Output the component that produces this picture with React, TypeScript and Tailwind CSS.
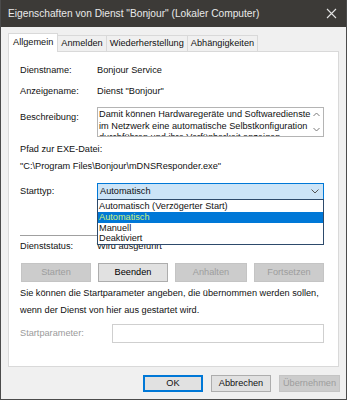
import React from "react";

const tabs = ["Allgemein", "Anmelden", "Wiederherstellung", "Abhängigkeiten"];

function Btn({ label, disabled, w }: { label: string; disabled?: boolean; w: string }) {
  return (
    <div
      className={`${w} h-[19px] flex items-center justify-center border ${
        disabled ? "bg-[#cccccc] border-[#c4c4c4] text-[#9d9d9d]" : "bg-[#e1e1e1] border-[#adadad] text-black"
      }`}
    >
      {label}
    </div>
  );
}

export default function App() {
  return (
    <div className="w-[347px] h-[400px] bg-[#f0f0f0] flex flex-col border-x border-b border-[#4b4b4b] font-['Liberation_Sans',Arial,sans-serif] text-[9.2px] text-[#111] overflow-hidden">
      {/* title bar */}
      <div className="h-[27px] shrink-0 bg-[#3c3a37] flex items-center justify-between pl-[7px] pr-[8px] text-[#e9e9e9] text-[10.2px]">
        <span>Eigenschaften von Dienst "Bonjour" (Lokaler Computer)</span>
        <svg width="11" height="11" viewBox="0 0 11 11" className="mr-[1px]">
          <path d="M1 1 L10 10 M10 1 L1 10" stroke="#e4e4e4" strokeWidth="1.1" />
        </svg>
      </div>

      {/* tabs */}
      <div className="flex items-end h-[24px] pl-[7px] shrink-0">
        {tabs.map((t, i) =>
          i === 0 ? (
            <div key={t} className="h-[19px] px-[4px] bg-white border border-b-0 border-[#d9d9d9] flex items-center relative top-px z-10">
              {t}
            </div>
          ) : (
            <div key={t} className="h-[16px] px-[3px] bg-[#f0f0f0] border border-l-0 border-b-0 border-[#d9d9d9] flex items-center">
              {t}
            </div>
          )
        )}
      </div>

      {/* panel */}
      <div className="relative mx-[7px] w-[331px] h-[316px] bg-white border border-[#d9d9d9] flex flex-col pl-[11px] shrink-0">
        <div className="mt-[12px] h-[14px] flex items-center">
          <span className="w-[77px]">Dienstname:</span>
          <span>Bonjour Service</span>
        </div>
        <div className="mt-[7px] h-[14px] flex items-center">
          <span className="w-[77px]">Anzeigename:</span>
          <span>Dienst "Bonjour"</span>
        </div>
        <div className="mt-[8px] h-[30px] flex">
          <span className="w-[77px] pt-[4px]">Beschreibung:</span>
          <div className="w-[227px] h-[30px] border border-[#b4b4b4] flex overflow-hidden">
            <div className="flex-1 pl-[1px] leading-[11.5px] pt-[1px] overflow-hidden whitespace-nowrap">
              Damit können Hardwaregeräte und Softwaredienste
              <br />
              im Netzwerk eine automatische Selbstkonfiguration
              <br />
              durchführen und ihre Verfügbarkeit anzeigen.
            </div>
            <div className="w-[12px] flex flex-col justify-between items-center py-[4px] pr-[2px]">
              <svg width="7" height="5" viewBox="0 0 7 5"><path d="M0.5 4 L3.5 1 L6.5 4" fill="none" stroke="#7a7a7a" /></svg>
              <svg width="7" height="5" viewBox="0 0 7 5"><path d="M0.5 1 L3.5 4 L6.5 1" fill="none" stroke="#7a7a7a" /></svg>
            </div>
          </div>
        </div>
        <div className="mt-[6px] h-[14px] flex items-center">Pfad zur EXE-Datei:</div>
        <div className="mt-[3px] h-[14px] flex items-center">"C:\Program Files\Bonjour\mDNSResponder.exe"</div>
        <div className="mt-[9px] h-[17px] flex items-center">
          <span className="w-[77px]">Starttyp:</span>
          <div className="w-[227px] h-[17px] bg-[#cce4f7] border border-[#0078d7] flex items-center justify-between pl-[2px] pr-[4px]">
            <span>Automatisch</span>
            <svg width="8" height="5" viewBox="0 0 8 5"><path d="M0.5 0.5 L4 4 L7.5 0.5" fill="none" stroke="#555" /></svg>
          </div>
        </div>
        <div className="mt-[35px] h-px w-[304px] bg-[#a0a0a0]" />
        <div className="mt-[4px] h-[14px] flex items-center">
          <span className="w-[77px]">Dienststatus:</span>
          <span>Wird ausgeführt</span>
        </div>
        <div className="mt-[9px] flex gap-[7px] pl-px">
          <Btn label="Starten" disabled w="w-[70px]" />
          <Btn label="Beenden" w="w-[70px]" />
          <Btn label="Anhalten" disabled w="w-[72px]" />
          <Btn label="Fortsetzen" disabled w="w-[70px]" />
        </div>
        <div className="mt-[3px] leading-[17px] whitespace-nowrap">
          Sie können die Startparameter angeben, die übernommen werden sollen,
          <br />
          wenn der Dienst von hier aus gestartet wird.
        </div>
        <div className="mt-[5px] h-[19px] flex items-center">
          <span className="w-[92px] text-[#9a9a9a]">Startparameter:</span>
          <div className="w-[212px] h-[19px] border border-[#cfcfcf] bg-white" />
        </div>

        {/* open dropdown list */}
        <div className="absolute left-[88px] top-[147px] w-[227px] h-[46px] bg-white border border-[#2d4a6b] flex flex-col leading-[10.8px] pt-[1px] z-20">
          <div className="pl-[1px]">Automatisch (Verzögerter Start)</div>
          <div className="pl-[1px] bg-[#0078d7] text-[#cdf27c]">Automatisch</div>
          <div className="pl-[1px]">Manuell</div>
          <div className="pl-[1px]">Deaktiviert</div>
        </div>
      </div>

      {/* footer buttons */}
      <div className="flex justify-end gap-[8px] pr-[6px] mt-[8px]">
        <div className="w-[60px] h-[17px] bg-[#e1e1e1] border-2 border-[#0078d7] flex items-center justify-center">OK</div>
        <div className="w-[60px] h-[17px] bg-[#e1e1e1] border border-[#adadad] flex items-center justify-center">Abbrechen</div>
        <div className="w-[61px] h-[17px] bg-[#cccccc] border border-[#c4c4c4] text-[#9d9d9d] flex items-center justify-center">Übernehmen</div>
      </div>
    </div>
  );
}
